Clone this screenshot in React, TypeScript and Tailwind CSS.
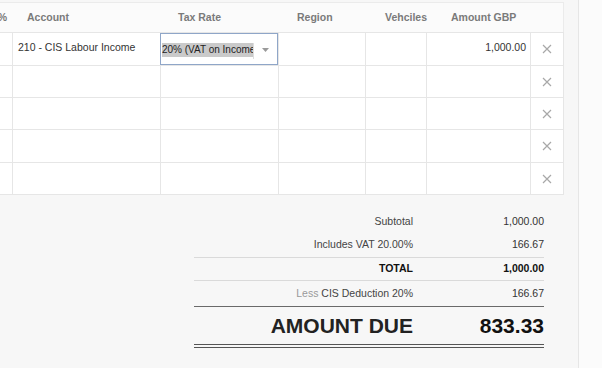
import React from "react";

const cols = [12, 148, 118, 87, 61, 104, 34];

function XIcon() {
  return (
    <svg width="10" height="10" viewBox="0 0 10 10" className="text-[#a8a8a8]">
      <path d="M1 1 L9 9 M9 1 L1 9" stroke="currentColor" strokeWidth="1.2" fill="none" />
    </svg>
  );
}

function Row({ h, first }: { h: string; first?: boolean }) {
  return (
    <div className={`flex border-t border-[#e6e6e6] bg-white ${h}`}>
      <div className="w-[12px] shrink-0" />
      <div className="w-[148px] shrink-0 border-l border-[#e6e6e6] pl-[5px] pt-[8px] leading-[12px] text-[10.5px] text-[#333]">
        {first ? "210 - CIS Labour Income" : ""}
      </div>
      <div className="w-[118px] shrink-0 border-l border-[#e6e6e6] relative">
        {first && (
          <div className="absolute -left-px top-0 bottom-0 right-0 border border-[#8fa6c8] flex items-center">
            <span className="mt-[1px] ml-px h-[14px] w-[91px] overflow-hidden whitespace-nowrap bg-[#cacaca] text-[10px] leading-[14px] text-[#222]">
              20% (VAT on Income
            </span>
            <span className="mt-[4px] h-[16px] w-px bg-[#dedede]" />
            <svg width="7" height="4" viewBox="0 0 7 4" className="ml-[8px] mt-[1px]">
              <path d="M0 0 L7 0 L3.5 4 Z" fill="#9a9a9a" />
            </svg>
          </div>
        )}
      </div>
      <div className="w-[87px] shrink-0 border-l border-[#e6e6e6]" />
      <div className="w-[61px] shrink-0 border-l border-[#e6e6e6]" />
      <div className="w-[104px] shrink-0 border-l border-[#e6e6e6] pr-[4px] pt-[8px] text-right leading-[12px] text-[10.5px] text-[#333]">
        {first ? "1,000.00" : ""}
      </div>
      <div className="w-[34px] shrink-0 border-x border-[#e6e6e6] flex items-center justify-center">
        <XIcon />
      </div>
    </div>
  );
}

export default function App() {
  return (
    <div className="w-[602px] h-[368px] overflow-hidden flex bg-[#f7f7f7] font-['Liberation_Sans',Arial,sans-serif]">
      <div className="w-[578px] shrink-0 flex flex-col">
        <div className="h-[2px]" />
        <div className="w-[564px]">
          <div className="h-[30px] flex items-center border-t border-r border-[#ebebeb] bg-[#fbfbfb] text-[10.5px] font-bold text-[#7a7a7a] whitespace-nowrap">
            <div className="w-[12px] shrink-0 overflow-hidden flex justify-end pr-[5px]">%</div>
            <div className="w-[148px] shrink-0 pl-[15px]">Account</div>
            <div className="w-[118px] shrink-0 pl-[18px]">Tax Rate</div>
            <div className="w-[87px] shrink-0 pl-[19px]">Region</div>
            <div className="w-[61px] shrink-0 pl-[20px]">Vehciles</div>
            <div className="w-[104px] shrink-0 pl-[25px]">Amount GBP</div>
          </div>
          <Row h="h-[33px]" first />
          <Row h="h-[32px]" />
          <Row h="h-[32px]" />
          <Row h="h-[33px]" />
          <Row h="h-[32px]" />
          <div className="h-px bg-[#e6e6e6]" />
        </div>

        <div className="ml-[194px] mt-[15px] w-[350px] flex flex-col text-[10.5px] text-[#333]">
          <div className="h-[23px] flex items-center">
            <div className="w-[219px] text-right text-[#444]">Subtotal</div>
            <div className="w-[131px] text-right">1,000.00</div>
          </div>
          <div className="h-[24px] flex items-center">
            <div className="w-[219px] text-right text-[#444]">Includes VAT 20.00%</div>
            <div className="w-[131px] text-right">166.67</div>
          </div>
          <div className="h-[23px] flex items-center border-t border-[#dadada] font-bold text-[#111]">
            <div className="w-[219px] text-right">TOTAL</div>
            <div className="w-[131px] text-right">1,000.00</div>
          </div>
          <div className="h-[26px] flex items-center border-t border-[#dadada]">
            <div className="w-[219px] text-right text-[#444]">
              <span className="text-[#9a9a9a]">Less</span> CIS Deduction 20%
            </div>
            <div className="w-[131px] text-right">166.67</div>
          </div>
          <div className="h-[38px] flex items-center border-t border-[#6a6a6a] text-[21px] font-bold text-[#111]">
            <div className="w-[219px] text-right text-[#222]">AMOUNT DUE</div>
            <div className="w-[131px] text-right">833.33</div>
          </div>
          <div className="h-[4px] border-y border-[#555]" />
        </div>
      </div>
      <div className="w-px shrink-0 bg-[#e6e6e6]" />
      <div className="flex-1 bg-[#fbfbfb]" />
    </div>
  );
}
